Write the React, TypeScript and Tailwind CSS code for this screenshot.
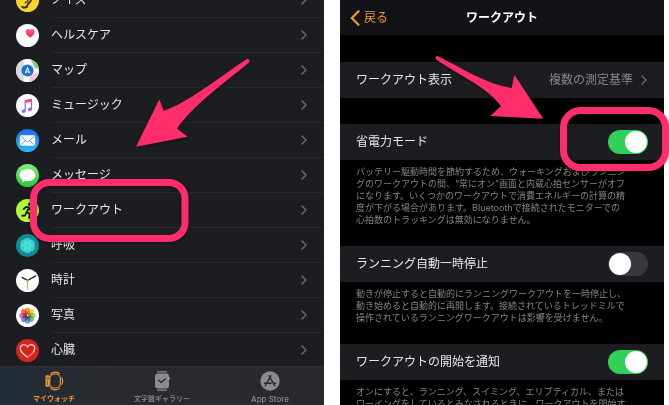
import React from 'react';

const ICON = 'block size-[23px] shrink-0';

function NoiseIcon() {
  return (
    <svg viewBox="0 0 24 24" className={ICON} aria-hidden="true">
      <circle cx="12" cy="12" r="12" fill="#f9d22f" />
      <path d="M6.500 18.500c1.500 1.500 5 1.300 5.500-1.500.4-2.500 3.500-3 4-6.500.3-3-1.500-6-4.500-6" fill="none" stroke="#3a3012" strokeWidth="2" strokeLinecap="round" />
      <path d="M9.500 14.500c2-.5 3-2 3.500-4" fill="none" stroke="#3a3012" strokeWidth="1.300" strokeLinecap="round" />
    </svg>
  );
}

function HealthIcon() {
  return (
    <svg viewBox="0 0 24 24" className={ICON} aria-hidden="true">
      <defs>
        <linearGradient id="health" x1="0" y1="0" x2="0" y2="1">
          <stop offset="0" stopColor="#ff5fa0" />
          <stop offset="1" stopColor="#f5233c" />
        </linearGradient>
      </defs>
      <circle cx="12" cy="12" r="12" fill="#fff" />
      <path d="M14.800 14.200c-2.800-1.900-4.700-3.700-4.700-6 0-1.700 1.100-2.900 2.500-2.900 1 0 1.800.5 2.200 1.300.4-.8 1.200-1.300 2.200-1.300 1.400 0 2.500 1.200 2.500 2.900 0 2.300-1.900 4.100-4.700 6z" fill="url(#health)" />
    </svg>
  );
}

function MapIcon() {
  return (
    <svg viewBox="0 0 24 24" className={ICON} aria-hidden="true">
      <defs>
        <clipPath id="mapClip"><circle cx="12" cy="12" r="12" /></clipPath>
      </defs>
      <g clipPath="url(#mapClip)">
        <rect width="24" height="24" fill="#f6f6f4" />
        <path d="M0 0h8v24H0z" fill="#d9dad9" />
        <path d="M15 0h9v10h-4z" fill="#84d083" />
        <path d="M14 17l10-3v10H14z" fill="#f5c3d3" />
        <path d="M9 0h5v24H9z" fill="#fff" />
      </g>
      <circle cx="12" cy="12" r="6.300" fill="#1973d4" />
      <path d="M12 7.700l3 7.800-3-1.900-3 1.900z" fill="#fff" />
      <path d="M12 10.500l1 3-1-.6-1 .6z" fill="#1973d4" />
    </svg>
  );
}

function MusicIcon() {
  return (
    <svg viewBox="0 0 24 24" className={ICON} aria-hidden="true">
      <defs>
        <linearGradient id="music" x1="1" y1="0" x2="0" y2="1">
          <stop offset="0" stopColor="#fb4f6b" />
          <stop offset=".5" stopColor="#b65fd0" />
          <stop offset="1" stopColor="#3d9bf5" />
        </linearGradient>
      </defs>
      <circle cx="12" cy="12" r="12" fill="#fff" />
      <path d="M9 6.300l7.800-1.700v10.800c0 1.600-1 2.500-2.500 2.500-1.200 0-1.900-.7-1.900-1.600 0-1.100.8-1.700 2-1.900.8-.1 1.100-.3 1.100-1V8.200l-5.200 1.100v7.900c0 1.600-1 2.500-2.400 2.500-1.200 0-2-.7-2-1.600 0-1.100.8-1.700 2-1.900.8-.1 1.100-.3 1.100-1z" fill="url(#music)" />
    </svg>
  );
}

function MailIcon() {
  return (
    <svg viewBox="0 0 24 24" className={ICON} aria-hidden="true">
      <defs>
        <linearGradient id="mail" x1="0" y1="0" x2="0" y2="1">
          <stop offset="0" stopColor="#1b6df0" />
          <stop offset="1" stopColor="#2cb9fa" />
        </linearGradient>
      </defs>
      <circle cx="12" cy="12" r="12" fill="url(#mail)" />
      <rect x="4" y="6.500" width="16" height="11" rx="1.500" fill="#fff" />
      <path d="M4.500 7l6.300 6c.7.6 1.700.6 2.400 0l6.300-6M4.600 17l5.200-5M19.400 17l-5.200-5" fill="none" stroke="#2c8cf3" strokeWidth=".8" />
    </svg>
  );
}

function MessageIcon() {
  return (
    <svg viewBox="0 0 24 24" className={ICON} aria-hidden="true">
      <defs>
        <linearGradient id="message" x1="0" y1="0" x2="0" y2="1">
          <stop offset="0" stopColor="#7df07a" />
          <stop offset="1" stopColor="#2ac83a" />
        </linearGradient>
      </defs>
      <circle cx="12" cy="12" r="12" fill="url(#message)" />
      <path d="M12 5.200c4.800 0 8.400 2.800 8.400 6.400s-3.600 6.400-8.400 6.400c-.9 0-1.700-.1-2.500-.3-1 .8-2.200 1.200-3.700 1.200.8-.7 1.200-1.400 1.200-2.200-2.100-1.200-3.400-3-3.400-5.100 0-3.600 3.600-6.400 8.400-6.400z" fill="#fff" />
    </svg>
  );
}

function WorkoutIcon() {
  return (
    <svg viewBox="0 0 24 24" className={ICON} aria-hidden="true">
      <circle cx="12" cy="12" r="12" fill="#b1f83a" />
      <circle cx="14.300" cy="5.500" r="1.800" fill="#15190c" />
      <path d="M8 10.500l2.500-2.300 3 .5-2.300 5 3.200 1.900-.7 4.200M11 14l-1.500 3.200-3 .3M13.300 9l1.700 2.500 2.500.2" fill="none" stroke="#15190c" strokeWidth="1.900" strokeLinecap="round" strokeLinejoin="round" />
    </svg>
  );
}

function BreatheIcon() {
  return (
    <svg viewBox="0 0 24 24" className={ICON} aria-hidden="true">
      <circle cx="12" cy="12" r="12" fill="#128a93" />
      {[0, 60, 120, 180, 240, 300].map((angle) => (
        <circle key={angle} cx="12" cy="7.800" r="3.900" fill="#4fe3dc" fillOpacity=".7" transform={`rotate(${angle} 12 12)`} />
      ))}
    </svg>
  );
}

function ClockIcon() {
  return (
    <svg viewBox="0 0 24 24" className={ICON} aria-hidden="true">
      <circle cx="12" cy="12" r="12" fill="#fff" />
      <path d="M12 12v9.500" stroke="#dba64a" strokeWidth="1" />
      <path d="M12 12L6.500 8.800M12 12l8.500-4.800" stroke="#1a1a1a" strokeWidth="1.400" strokeLinecap="round" />
      <circle cx="12" cy="12" r="1.100" fill="#dba64a" />
    </svg>
  );
}

const PETALS = ['#f59a2c', '#e6d23a', '#9bcb4b', '#5fb98c', '#5a8fd6', '#8a72c4', '#c8669f', '#ee5f4e'];

function PhotosIcon() {
  return (
    <svg viewBox="0 0 24 24" className={ICON} aria-hidden="true">
      <circle cx="12" cy="12" r="12" fill="#fff" />
      {PETALS.map((color, i) => (
        <rect key={color} x="9.300" y="3.600" width="5.400" height="7.800" rx="2.700" fill={color} fillOpacity=".9" className="mix-blend-multiply" transform={`rotate(${i * 45} 12 12)`} />
      ))}
    </svg>
  );
}

function HeartIcon() {
  return (
    <svg viewBox="0 0 24 24" className={ICON} aria-hidden="true">
      <circle cx="12" cy="12" r="12" fill="#d3251f" />
      <path d="M12 19c-4.600-3-7.500-5.700-7.500-9 0-2.400 1.700-4.100 3.800-4.100 1.600 0 3 .8 3.700 2.200.7-1.400 2.100-2.200 3.700-2.200 2.100 0 3.800 1.700 3.800 4.100 0 1.300-.5 2.500-1.300 3.600" fill="none" stroke="#f9c9c0" strokeWidth="1.500" strokeLinecap="round" />
      <path d="M12 19c2.500-1.600 4.700-3.400 6.200-5.400" fill="none" stroke="#ee8378" strokeWidth="1.300" />
    </svg>
  );
}

function Chevron() {
  return (
    <svg viewBox="0 0 6 10" className="h-2.5 w-1.5 shrink-0" fill="none" stroke="#6c6d71" strokeWidth="1.400" strokeLinecap="round" strokeLinejoin="round" aria-hidden="true">
      <path d="M1 1l4 4-4 4" />
    </svg>
  );
}

const APPS = [
  { name: 'ノイズ', Icon: NoiseIcon },
  { name: 'ヘルスケア', Icon: HealthIcon },
  { name: 'マップ', Icon: MapIcon },
  { name: 'ミュージック', Icon: MusicIcon },
  { name: 'メール', Icon: MailIcon },
  { name: 'メッセージ', Icon: MessageIcon },
  { name: 'ワークアウト', Icon: WorkoutIcon },
  { name: '呼吸', Icon: BreatheIcon },
  { name: '時計', Icon: ClockIcon },
  { name: '写真', Icon: PhotosIcon },
  { name: '心臓', Icon: HeartIcon },
];

function WatchTabIcon() {
  return (
    <svg viewBox="0 0 20 20" className="size-5" fill="none" stroke="#f19a37" aria-hidden="true">
      <rect x="5.800" y="3" width="10.500" height="14" rx="4.500" strokeWidth="1.100" />
      <path d="M6.500 3.500C8 .5 14 .3 15.800 3.300M6.500 16.500c1.500 3 7.500 3.200 9.300.2M17.600 6.500c1.200 2 1.200 5 0 7.200" strokeWidth="1.100" />
      <rect x="1.500" y="4.200" width="4" height="11.600" rx="1" fill="#f19a37" stroke="none" />
      <circle cx="3.500" cy="7.500" r="1" stroke="#2a2d30" strokeWidth=".6" />
      <path d="M3.500 10v4" stroke="#2a2d30" strokeWidth=".6" />
    </svg>
  );
}

function FaceTabIcon() {
  return (
    <svg viewBox="0 0 20 20" className="size-5" fill="none" aria-hidden="true">
      <path d="M5.500.9h9M5.500 19.100h9" stroke="#8b8c8f" strokeWidth="1.200" strokeLinecap="round" />
      <rect x="3" y="2.600" width="14" height="14.800" rx="3" fill="#8b8c8f" />
      <path d="M17.300 6.500v2" stroke="#8b8c8f" strokeWidth="1" strokeLinecap="round" />
      <path d="M6.500 9l2.700 2.500 4.300-3.700" stroke="#2a2b2e" strokeWidth="1.300" strokeLinecap="round" strokeLinejoin="round" />
    </svg>
  );
}

function StoreTabIcon() {
  return (
    <svg viewBox="0 0 20 20" className="size-5" fill="none" aria-hidden="true">
      <circle cx="10" cy="10" r="9.700" fill="#8b8c8f" />
      <path d="M10.900 4.800L6.300 12.900M9.100 4.800l5.600 9.800M4.500 12.300h6.600M13.300 12.300h2.200M5.600 14.200l-.3.500" stroke="#2a2b2e" strokeWidth="1.500" strokeLinecap="round" />
    </svg>
  );
}

function WatchApp() {
  return (
    <section className="flex h-full flex-col overflow-hidden bg-[#1c1d21]">
      <ul className="flex min-h-0 flex-1 flex-col justify-end overflow-hidden">
        {APPS.map(({ name, Icon }) => (
          <li key={name} className="shrink-0">
            <a href="#" className="flex h-[35px] items-center gap-3 pl-4">
              <Icon />
              <span className="flex h-full flex-1 items-center justify-between border-b border-[#27282c] pr-[17px] text-xs text-[#e6e6e8]">
                {name}
                <Chevron />
              </span>
            </a>
          </li>
        ))}
      </ul>
      <nav className="relative -mt-0.5 grid h-[39px] shrink-0 grid-cols-3 border-t border-[#303135] bg-linear-to-r from-[#222d36] via-[#292a2d] via-40% to-[#28292c]">
        <a href="#" className="flex flex-col items-center gap-0.5 pt-1 text-[7px] leading-3 font-bold text-[#f19a37]">
          <WatchTabIcon />
          マイウォッチ
        </a>
        <a href="#" className="flex flex-col items-center gap-0.5 pt-1 text-[7px] leading-3 font-medium text-[#8b8c8f]">
          <FaceTabIcon />
          文字盤ギャラリー
        </a>
        <a href="#" className="flex flex-col items-center gap-0.5 pt-1 text-[8px] leading-3 font-medium text-[#8b8c8f]">
          <StoreTabIcon />
          App Store
        </a>
      </nav>
    </section>
  );
}

type SettingProps = { id: string; label: string; on: boolean; lines: string[] };

function Setting({ id, label, on, lines }: SettingProps) {
  return (
    <div className="shrink-0">
      <div className="flex h-9 items-center justify-between bg-[#1c1d21] px-4">
        <label htmlFor={id} className="text-xs text-[#e6e6e8]">{label}</label>
        <input
          id={id}
          type="checkbox"
          role="switch"
          defaultChecked={on}
          aria-describedby={`${id}-note`}
          className="flex h-6 w-10 appearance-none items-center rounded-full bg-[#39393d] p-px before:size-[22px] before:rounded-full before:bg-white checked:justify-end checked:bg-[#30d158]"
        />
      </div>
      <p id={`${id}-note`} className="px-4 pt-1.5 pb-5 text-[9px] leading-3 whitespace-nowrap text-[#85858a]">
        {lines.map((line) => (
          <span key={line} className="block">{line}</span>
        ))}
      </p>
    </div>
  );
}

const SETTINGS: SettingProps[] = [
  {
    id: 'power',
    label: '省電力モード',
    on: true,
    lines: [
      'バッテリー駆動時間を節約するため、ウォーキングおよびランニン',
      'グのワークアウトの間、“常にオン”画面と内蔵心拍センサーがオフ',
      'になります。いくつかのワークアウトで消費エネルギーの計算の精',
      '度が下がる場合があります。Bluetoothで接続されたモニターでの',
      '心拍数のトラッキングは無効になりません。',
    ],
  },
  {
    id: 'pause',
    label: 'ランニング自動一時停止',
    on: false,
    lines: [
      '動きが停止すると自動的にランニングワークアウトを一時停止し、',
      '動き始めると自動的に再開します。接続されているトレッドミルで',
      '操作されているランニングワークアウトは影響を受けません。',
    ],
  },
  {
    id: 'start',
    label: 'ワークアウトの開始を通知',
    on: true,
    lines: [
      'オンにすると、ランニング、スイミング、エリプティカル、または',
      'ローイングをしているとみなされるときに、ワークアウトを開始す',
    ],
  },
];

function WorkoutSettings() {
  return (
    <section className="flex h-full flex-col overflow-hidden bg-black">
      <header className="grid h-[35px] shrink-0 grid-cols-[1fr_auto_1fr] items-center bg-[#121316] px-2.5 text-xs">
        <button type="button" className="flex items-center gap-1 justify-self-start text-[#f19a37]">
          <svg viewBox="0 0 10 16" className="h-4 w-2.5" fill="none" stroke="currentColor" strokeWidth="2.200" strokeLinecap="round" strokeLinejoin="round" aria-hidden="true">
            <path d="M8.500 1.200L1.800 8l6.700 6.800" />
          </svg>
          戻る
        </button>
        <h1 className="font-bold text-white">ワークアウト</h1>
      </header>
      <a href="#" className="mt-[27px] mb-[26px] flex h-9 shrink-0 items-center bg-[#1c1d21] pr-[17px] pl-4 text-xs text-[#e6e6e8]">
        ワークアウト表示
        <span className="mr-2 ml-auto text-[#85858a]">複数の測定基準</span>
        <Chevron />
      </a>
      {SETTINGS.map((setting) => (
        <Setting key={setting.id} {...setting} />
      ))}
    </section>
  );
}

function Annotations() {
  return (
    <svg viewBox="0 0 669 405" className="pointer-events-none absolute inset-0 h-full w-full drop-shadow-[0_1px_1px_rgba(0,0,0,0.5)]" aria-hidden="true">
      <g fill="#ff2d6c">
        <path d="M136 146.700L159.300 99.300L163.700 111C190 101 214 81 246.500 59.200C248.500 58 250.500 60.500 249 62.500C226 82 194 104 177 128.700L187.700 136.700Z" />
        <path d="M543.300 118.700L514.300 74.700L511.700 88C486 84 464 69 438 56.200C436 55.500 434.500 58 436.500 59.700C460 76 486 86 501 106L490.300 116Z" />
      </g>
      <g fill="none" stroke="#ff2d6c" strokeWidth="7">
        <rect x="33.500" y="182.500" width="151.500" height="56" rx="16" />
        <rect x="563.500" y="110.500" width="102" height="57" rx="17" />
      </g>
    </svg>
  );
}

export default function App() {
  return (
    <main className="relative grid h-screen grid-cols-2 gap-4 bg-white pr-[5px] font-['Inter','Noto_Sans_CJK_JP',sans-serif]" lang="ja">
      <WatchApp />
      <WorkoutSettings />
      <Annotations />
    </main>
  );
}
